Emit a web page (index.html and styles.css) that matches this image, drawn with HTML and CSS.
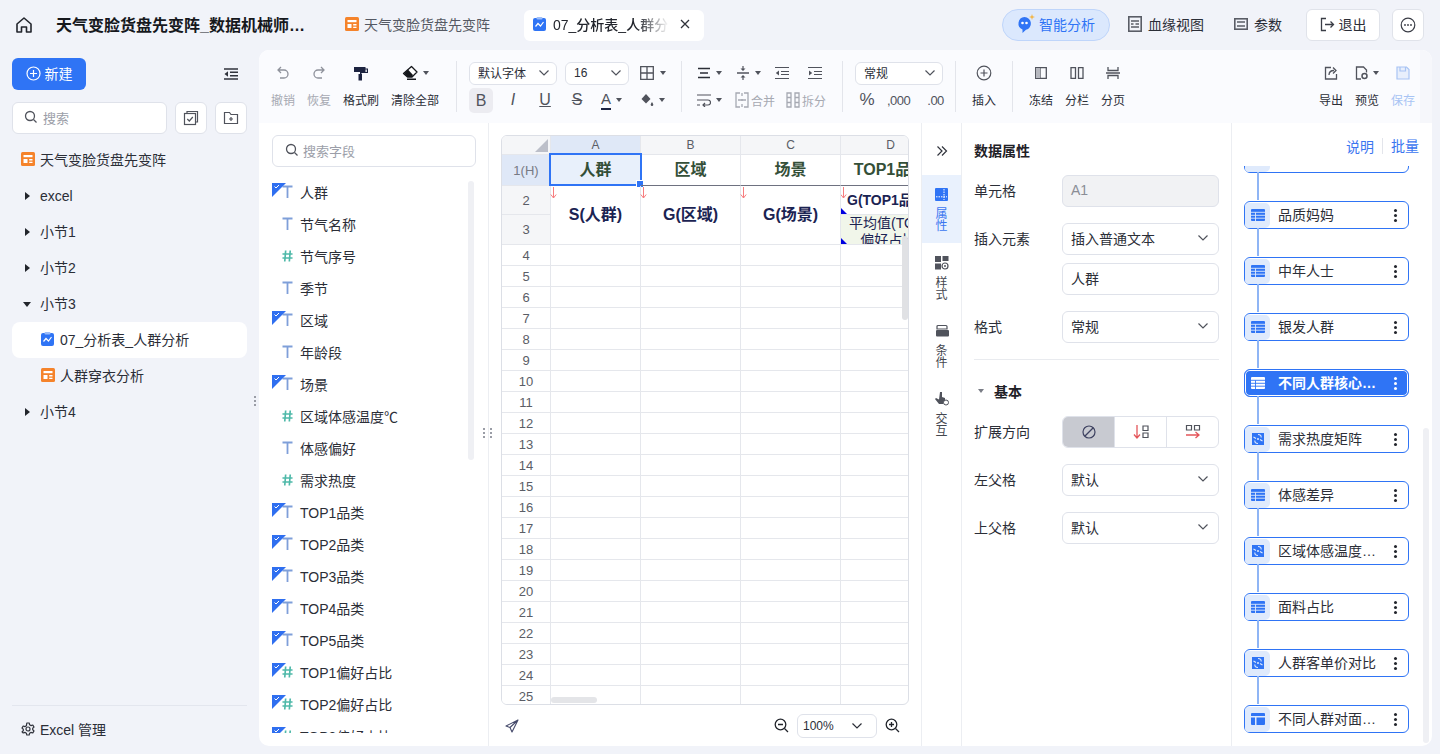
FILE: index.html
```html
<!DOCTYPE html>
<html lang="zh-CN">
<head>
  <meta charset="UTF-8">
  <title>天气变脸货盘先变阵</title>
  <link rel="stylesheet" href="styles.css">
</head>
<body>

<svg class="defs" aria-hidden="true">
  <symbol id="i-board" viewBox="0 0 14 14">
    <rect width="14" height="14" rx="1.5" fill="#f5832b"/>
    <rect x="2.500" y="3" width="9" height="2.200" fill="#fff"/>
    <rect x="2.500" y="7" width="4" height="4" fill="#fff"/>
    <rect x="8.200" y="7" width="3.300" height="1.500" fill="#fff"/>
    <rect x="8.200" y="9.700" width="3.300" height="1.300" fill="#fff"/>
  </symbol>
  <symbol id="i-report" viewBox="0 0 14 14">
    <rect y="1" width="13" height="13" rx="2" fill="#2f74f5"/>
    <rect x="3.500" width="6" height="2.400" rx="1" fill="#9dbdf8"/>
    <path d="M2.500 9.500 5 6.500l2.500 2.500L10.500 5" fill="none" stroke="#fff" stroke-width="1.200"/>
  </symbol>
  <symbol id="i-chev" viewBox="0 0 12 12">
    <path d="M1.500 3.500 6 8l4.500-4.500" fill="none" stroke="currentColor" stroke-width="1.200"/>
  </symbol>
  <symbol id="i-search" viewBox="0 0 14 14">
    <circle cx="6" cy="6" r="4.500" fill="none" stroke="currentColor" stroke-width="1.300"/>
    <path d="m9.500 9.500 3 3" stroke="currentColor" stroke-width="1.300"/>
  </symbol>
  <symbol id="i-t" viewBox="0 0 11 14">
    <path d="M.5 1.500h10M5.500 1.500V13" fill="none" stroke="#7f9fd9" stroke-width="1.800"/>
  </symbol>
  <symbol id="i-hash" viewBox="0 0 12 14">
    <path d="M4 1 3 13M9 1 8 13M.5 4.800h11M.5 9.200h11" fill="none" stroke="#4fb9a9" stroke-width="1.800"/>
  </symbol>
  <symbol id="i-tick" viewBox="0 0 14 14">
    <path d="M0 0h14L0 14z" fill="#2f6ff0"/>
    <path d="m2.500 3.500 1.500 1.500 3-3" fill="none" stroke="#fff" stroke-width="1"/>
  </symbol>
  <symbol id="i-table" viewBox="0 0 14 12">
    <rect width="14" height="12" rx="1" fill="currentColor"/>
    <path d="M0 3.300h14M0 6.300h14M0 9.200h14M4.500 3.300V12" stroke="var(--gap, #dfeafc)" stroke-width=".9"/>
  </symbol>
  <symbol id="i-cols" viewBox="0 0 14 12">
    <path d="M1 0h12a1 1 0 0 1 1 1v2H0V1a1 1 0 0 1 1-1zM0 4.500h4v7.500H1a1 1 0 0 1-1-1zM5.500 4.500H14V11a1 1 0 0 1-1 1H5.500z" fill="currentColor"/>
  </symbol>
  <symbol id="i-pivot" viewBox="0 0 12 12">
    <rect width="12" height="12" fill="#2f74f5"/>
    <path d="M6 1.500c2.500 0 3.500 1.500 3 3M6 10.500c-2.500 0-3.500-1.500-3-3M1.500 4 4 5.500M8 6.500l2.500 1.500" fill="none" stroke="#dfeafc" stroke-width="1.100"/>
    <circle cx="6" cy="6" r="1" fill="#dfeafc"/>
  </symbol>
  <symbol id="i-arrow" viewBox="0 0 7 12">
    <path d="M3.500 0v11M.8 7.500l2.700 3.500 2.700-3.500" fill="none" stroke="#f77e80" stroke-width="1"/>
  </symbol>
  <symbol id="i-lines" viewBox="0 0 14 14">
    <path d="M1 2.500h12M3 7h8M1 11.500h12" fill="none" stroke="currentColor" stroke-width="1.300"/>
  </symbol>
</svg>

<div class="app">
  <header class="topbar">
    <svg class="home" width="18" height="18" viewBox="0 0 18 18"><path d="M2 8 9 2l7 6v8h-4.500v-5h-5v5H2z" fill="none" stroke="#22252c" stroke-width="1.600" stroke-linejoin="round"/></svg>
    <h1 class="doc-title">天气变脸货盘先变阵_数据机械师分析报告</h1>
    <div class="tab"><svg width="14" height="14"><use href="#i-board"/></svg>天气变脸货盘先变阵</div>
    <div class="tab tab-active">
      <svg width="14" height="14"><use href="#i-report"/></svg>
      <span class="tab-name">07_分析表_人群分析表格</span>
      <svg class="tab-close" width="10" height="10" viewBox="0 0 10 10"><path d="m1 1 8 8M9 1 1 9" stroke="#30333a" stroke-width="1.300"/></svg>
    </div>
    <div class="top-actions">
      <button class="ai-btn">
        <svg width="18" height="20" viewBox="0 0 18 20"><path d="M7.500 3a6.500 6.500 0 0 1 1.500 12.800L5.500 19v-3.500A6.500 6.500 0 0 1 7.500 3z" fill="#2f74f5"/><circle cx="5.500" cy="9" r="1.300" fill="#fff"/><circle cx="9.500" cy="9" r="1.300" fill="#fff"/><path d="m15 0 .7 2.300L18 3l-2.300.7L15 6l-.7-2.300L12 3l2.300-.7z" fill="#f4b33c"/></svg>
        智能分析
      </button>
      <div class="top-link lineage">
        <svg width="14" height="16" viewBox="0 0 14 16"><rect x=".8" y=".8" width="12.400" height="14.400" fill="none" stroke="#5a5d66" stroke-width="1.600"/><path d="M3 5h8M3 8h2.500M7.500 8H11M3 11h8" stroke="#5a5d66" stroke-width="1.300"/></svg>
        血缘视图
      </div>
      <div class="top-link params">
        <svg width="14" height="14" viewBox="0 0 14 14"><rect x=".8" y="1.800" width="12.400" height="10.400" fill="none" stroke="#5a5d66" stroke-width="1.600"/><path d="M3 5h8M3 9h8" stroke="#5a5d66" stroke-width="1.300"/></svg>
        参数
      </div>
      <button class="exit-btn">
        <svg width="15" height="15" viewBox="0 0 15 15"><path d="M6 1.500H1.500v12H6M5 7.500h8.500M10.500 4.500l3 3-3 3" fill="none" stroke="#3a3d46" stroke-width="1.300"/></svg>
        退出
      </button>
      <button class="more-btn">
        <svg width="16" height="16" viewBox="0 0 16 16"><circle cx="8" cy="8" r="6.800" fill="none" stroke="#3a3d46" stroke-width="1.200"/><circle cx="5" cy="8" r=".9" fill="#3a3d46"/><circle cx="8" cy="8" r=".9" fill="#3a3d46"/><circle cx="11" cy="8" r=".9" fill="#3a3d46"/></svg>
      </button>
    </div>
  </header>

  <div class="workspace">
    <aside class="sidebar">
      <div class="side-top">
        <button class="new-btn">
          <svg width="15" height="15" viewBox="0 0 15 15"><circle cx="7.500" cy="7.500" r="6.500" fill="none" stroke="#fff" stroke-width="1.200"/><path d="M7.500 4v7M4 7.500h7" stroke="#fff" stroke-width="1.200"/></svg>
          新建
        </button>
        <svg width="14" height="12" viewBox="0 0 14 12"><path d="M0 1h14M6 4.300h8M6 7.700h8M0 11h14" stroke="#30333c" stroke-width="1.400"/><path d="M4 3.300v5.400L.5 6z" fill="#30333c"/></svg>
      </div>
      <div class="side-search">
        <div class="search-box side-box"><svg width="14" height="14"><use href="#i-search"/></svg>搜索</div>
        <button class="icon-btn">
          <svg width="16" height="16" viewBox="0 0 16 16"><path d="M4 3.500V1.500h10.500v10.500H12.500" fill="none" stroke="#50535c" stroke-width="1.200"/><rect x="1.500" y="3.500" width="11" height="11" fill="none" stroke="#50535c" stroke-width="1.200"/><path d="m4.300 9 2 2 3.500-4" fill="none" stroke="#50535c" stroke-width="1.200"/></svg>
        </button>
        <button class="icon-btn">
          <svg width="16" height="16" viewBox="0 0 16 16"><path d="M1.500 2.500h5l1.500 2h6.500v9h-13z" fill="none" stroke="#50535c" stroke-width="1.200"/><path d="M8 7v4M6 9h4" stroke="#50535c" stroke-width="1.200"/></svg>
        </button>
      </div>
      <ul class="side-tree">
        <li class="side-item top-file"><svg width="14" height="14"><use href="#i-board"/></svg>天气变脸货盘先变阵</li>
        <li class="side-item latin"><i class="tri-right"></i>excel</li>
        <li class="side-item"><i class="tri-right"></i>小节1</li>
        <li class="side-item"><i class="tri-right"></i>小节2</li>
        <li class="side-item"><i class="tri-down"></i>小节3</li>
        <li class="side-item child current"><svg width="14" height="14"><use href="#i-report"/></svg>07_分析表_人群分析</li>
        <li class="side-item child"><svg width="14" height="14"><use href="#i-board"/></svg>人群穿衣分析</li>
        <li class="side-item"><i class="tri-right"></i>小节4</li>
      </ul>
      <div class="side-foot">
        <svg width="14" height="14" viewBox="0 0 14 14"><path d="M5.800 1h2.400l.4 1.800 1.500.8 1.700-.6 1.200 2.100-1.300 1.200v1.400l1.300 1.200-1.200 2.100-1.700-.6-1.500.8-.4 1.800H5.800l-.4-1.800-1.500-.8-1.700.6L1 9.900l1.300-1.200V7.300L1 6.100 2.200 4l1.700.6 1.500-.8z" fill="none" stroke="#30333c" stroke-width="1.200" stroke-linejoin="round"/><circle cx="7" cy="7" r="2" fill="none" stroke="#30333c" stroke-width="1.200"/></svg>
        Excel 管理
      </div>
      <i class="grip grip-side"></i>
    </aside>

    <main class="main">
      <div class="toolbar">
        <div class="tgroup g-history">
          <div class="tool off">
            <svg width="16" height="24" viewBox="0 0 16 16"><path d="M6 2 3 5l3 3M3 5h6a4 4 0 0 1 0 8H5" fill="none" stroke="#8f929c" stroke-width="1.300"/></svg>
            <span>撤销</span>
          </div>
          <div class="tool off">
            <svg width="16" height="24" viewBox="0 0 16 16"><path d="m10 2 3 3-3 3M13 5H7a4 4 0 0 0 0 8h4" fill="none" stroke="#8f929c" stroke-width="1.300"/></svg>
            <span>恢复</span>
          </div>
          <div class="tool">
            <svg width="16" height="24" viewBox="0 0 16 16"><path d="M1 2h11.500v1.500H15V8H8.500v1.500H7V7h6.800V4.600h-1.300V7H1z" fill="#1c2340"/><rect x="5.500" y="9" width="3.500" height="6.500" fill="#1c2340"/></svg>
            <span>格式刷</span>
          </div>
          <div class="tool">
            <div class="icon-caret">
              <svg width="16" height="24" viewBox="0 0 16 16"><path d="M9.500 1.500 15 7l-5 5H5.500L1.500 8.500z" fill="#fff" stroke="#15171c" stroke-width="1.300" stroke-linejoin="round"/><path d="M2 8.500 6 4.500l5 5.500-1 2H5.500z" fill="#15171c"/><path d="M5 14.200h9" stroke="#15171c" stroke-width="1.400"/></svg>
              <i class="caret"></i>
            </div>
            <span>清除全部</span>
          </div>
        </div>

        <div class="tgroup g-font">
          <div class="trow">
            <div class="tsel font-sel">默认字体<svg width="12" height="12"><use href="#i-chev"/></svg></div>
            <div class="tsel size-sel">16<svg width="12" height="12"><use href="#i-chev"/></svg></div>
            <div class="icon-caret border-pick">
              <svg width="14" height="14" viewBox="0 0 14 14"><path d="M.7.700h12.600v12.600H.7zM7 .7v12.600M.7 7h12.600" fill="none" stroke="#50535c" stroke-width="1.300"/></svg>
              <i class="caret"></i>
            </div>
          </div>
          <div class="trow">
            <span class="fmt fmt-b">B</span>
            <span class="fmt fmt-i">I</span>
            <span class="fmt fmt-u">U</span>
            <span class="fmt fmt-s">S</span>
            <div class="icon-caret color-pick"><span class="fmt-a">A</span><i class="caret"></i></div>
            <div class="icon-caret">
              <svg width="14" height="14" viewBox="0 0 14 14"><path d="M6 1 1.500 6 6 10.500 10.500 6z" fill="#50535c"/><path d="M12 9c-1 1.500-1.300 2-1.300 2.700a1.300 1.300 0 0 0 2.600 0c0-.7-.3-1.200-1.300-2.700z" fill="#50535c"/></svg>
              <i class="caret"></i>
            </div>
          </div>
        </div>

        <div class="tgroup g-align">
          <div class="trow align-row">
            <div class="icon-caret"><svg width="14" height="14"><use href="#i-lines"/></svg><i class="caret"></i></div>
            <div class="icon-caret">
              <svg width="14" height="16" viewBox="0 0 14 16"><path d="M1 8h12" stroke="#50535c" stroke-width="1.300"/><path d="M7 1v4M7 11v4" stroke="#50535c" stroke-width="1.200"/><path d="M4.500 3.500 7 6l2.500-2.500zM4.500 12.500 7 10l2.500 2.500z" fill="#50535c"/></svg>
              <i class="caret"></i>
            </div>
            <svg class="indent" width="14" height="14" viewBox="0 0 14 14"><path d="M0 1.500h14M6 5.500h8M6 8.500h8M0 12.500h14" stroke="#50535c" stroke-width="1.200"/><path d="M4 4.500v5L.8 7z" fill="#50535c"/></svg>
            <svg class="indent" width="14" height="14" viewBox="0 0 14 14"><path d="M0 1.500h14M6 5.500h8M6 8.500h8M0 12.500h14" stroke="#50535c" stroke-width="1.200"/><path d="M1 4.500v5L4.200 7z" fill="#50535c"/></svg>
          </div>
          <div class="trow align-row">
            <div class="icon-caret">
              <svg width="14" height="14" viewBox="0 0 14 14"><path d="M0 2h14M0 7h11a2.500 2.500 0 0 1 0 5H6M0 12h3M8 10l-2 2 2 2" fill="none" stroke="#50535c" stroke-width="1.200"/></svg>
              <i class="caret"></i>
            </div>
            <div class="merge off">
              <svg width="14" height="16" viewBox="0 0 14 16"><path d="M5 1H1v14h4M9 1h4v14H9M7 1v3M7 7v2M7 12v3M3 8h8" fill="none" stroke="#a6a9b2" stroke-width="1.300"/></svg>
              <span>合并</span>
            </div>
            <div class="merge off">
              <svg width="14" height="16" viewBox="0 0 14 16"><path d="M5 1H1v14h4V1zM9 1h4v14H9zM1 5.500h4M1 10.500h4M9 5.500h4M9 10.500h4" fill="none" stroke="#a6a9b2" stroke-width="1.300"/></svg>
              <span>拆分</span>
            </div>
          </div>
        </div>

        <div class="tgroup g-num">
          <div class="trow"><div class="tsel num-sel">常规<svg width="12" height="12"><use href="#i-chev"/></svg></div></div>
          <div class="trow num-row"><span>%</span><span class="num-small">,000</span><span class="num-small">.00</span></div>
        </div>

        <div class="tgroup g-insert">
          <div class="tool">
            <svg width="16" height="24" viewBox="0 0 16 16"><circle cx="8" cy="8" r="6.800" fill="none" stroke="#50535c" stroke-width="1.200"/><path d="M8 4.500v7M4.500 8h7" stroke="#50535c" stroke-width="1.200"/></svg>
            <span>插入</span>
          </div>
        </div>

        <div class="tgroup g-page">
          <div class="tool">
            <svg width="14" height="24" viewBox="0 0 14 14"><path d="M1.700 1.700h10.600v10.600H1.700zM6 1.700v10.600" fill="none" stroke="#50535c" stroke-width="1.300"/><rect x="2" y="2" width="4" height="10" fill="#b6b8bf"/></svg>
            <span>冻结</span>
          </div>
          <div class="tool">
            <svg width="14" height="24" viewBox="0 0 14 14"><path d="M1 1.700h4.500v10.600H1zM8.500 1.700H13v10.600H8.500z" fill="none" stroke="#50535c" stroke-width="1.300"/></svg>
            <span>分栏</span>
          </div>
          <div class="tool">
            <svg width="14" height="24" viewBox="0 0 14 14"><path d="M2 1v3.500h10V1M2 13V9.500h10V13M0 7h14" fill="none" stroke="#50535c" stroke-width="1.300"/></svg>
            <span>分页</span>
          </div>
        </div>

        <div class="tgroup g-file">
          <div class="tool">
            <svg width="14" height="24" viewBox="0 0 14 14"><path d="M7 1.500H1.500v11.500h11V8" fill="none" stroke="#50535c" stroke-width="1.300"/><path d="M5 9c0-3 2-4.500 5-4.500M9 1.500l3 3-3 3" fill="none" stroke="#50535c" stroke-width="1.300"/></svg>
            <span>导出</span>
          </div>
          <div class="tool">
            <div class="icon-caret">
              <svg width="14" height="24" viewBox="0 0 14 14"><path d="M6 13H1.500V1h7l3 3v2.500" fill="none" stroke="#50535c" stroke-width="1.300"/><circle cx="9.500" cy="10" r="2.500" fill="none" stroke="#50535c" stroke-width="1.500"/></svg>
              <i class="caret caret-small"></i>
            </div>
            <span>预览</span>
          </div>
          <div class="tool save">
            <svg width="14" height="24" viewBox="0 0 14 14"><path d="M1 1h9.500L13 3.500V13H1z" fill="#e8effc" stroke="#a8c4f4" stroke-width="1.200"/><path d="M4 1v4h5.500V1" fill="none" stroke="#a8c4f4" stroke-width="1.200"/></svg>
            <span>保存</span>
          </div>
        </div>
      </div>

      <div class="panels">
        <section class="fields">
          <div class="search-box field-box"><svg width="14" height="14"><use href="#i-search"/></svg>搜索字段</div>
          <ul class="field-list">
            <li class="field on"><svg class="tick" width="14" height="14"><use href="#i-tick"/></svg><svg width="11" height="14"><use href="#i-t"/></svg>人群</li>
            <li class="field"><svg width="11" height="14"><use href="#i-t"/></svg>节气名称</li>
            <li class="field"><svg width="11" height="14"><use href="#i-hash"/></svg>节气序号</li>
            <li class="field"><svg width="11" height="14"><use href="#i-t"/></svg>季节</li>
            <li class="field on"><svg class="tick" width="14" height="14"><use href="#i-tick"/></svg><svg width="11" height="14"><use href="#i-t"/></svg>区域</li>
            <li class="field"><svg width="11" height="14"><use href="#i-t"/></svg>年龄段</li>
            <li class="field on"><svg class="tick" width="14" height="14"><use href="#i-tick"/></svg><svg width="11" height="14"><use href="#i-t"/></svg>场景</li>
            <li class="field"><svg width="11" height="14"><use href="#i-hash"/></svg>区域体感温度℃</li>
            <li class="field"><svg width="11" height="14"><use href="#i-t"/></svg>体感偏好</li>
            <li class="field"><svg width="11" height="14"><use href="#i-hash"/></svg>需求热度</li>
            <li class="field on"><svg class="tick" width="14" height="14"><use href="#i-tick"/></svg><svg width="11" height="14"><use href="#i-t"/></svg>TOP1品类</li>
            <li class="field on"><svg class="tick" width="14" height="14"><use href="#i-tick"/></svg><svg width="11" height="14"><use href="#i-t"/></svg>TOP2品类</li>
            <li class="field on"><svg class="tick" width="14" height="14"><use href="#i-tick"/></svg><svg width="11" height="14"><use href="#i-t"/></svg>TOP3品类</li>
            <li class="field on"><svg class="tick" width="14" height="14"><use href="#i-tick"/></svg><svg width="11" height="14"><use href="#i-t"/></svg>TOP4品类</li>
            <li class="field on"><svg class="tick" width="14" height="14"><use href="#i-tick"/></svg><svg width="11" height="14"><use href="#i-t"/></svg>TOP5品类</li>
            <li class="field on"><svg class="tick" width="14" height="14"><use href="#i-tick"/></svg><svg width="11" height="14"><use href="#i-hash"/></svg>TOP1偏好占比</li>
            <li class="field on"><svg class="tick" width="14" height="14"><use href="#i-tick"/></svg><svg width="11" height="14"><use href="#i-hash"/></svg>TOP2偏好占比</li>
            <li class="field on"><svg class="tick" width="14" height="14"><use href="#i-tick"/></svg><svg width="11" height="14"><use href="#i-hash"/></svg>TOP3偏好占比</li>
          </ul>
          <i class="scroll field-scroll"></i>
          <i class="grip grip-fields"></i>
        </section>

        <section class="sheet-pane">
          <div class="sheet">
            <table class="grid">
              <colgroup><col class="c-head"><col class="c-a"><col class="c-std"><col class="c-std"><col class="c-std"></colgroup>
              <tr class="r-cols"><th class="corner"><i></i></th><th class="col-sel">A</th><th>B</th><th>C</th><th>D</th></tr>
              <tr class="r-head">
                <th class="row-sel">1(H)</th>
                <td class="title-cell a1">人群<div class="a1-box"></div></td>
                <td class="title-cell">区域</td>
                <td class="title-cell">场景</td>
                <td class="title-cell">TOP1品类</td>
              </tr>
              <tr class="r-2">
                <th class="row-grey">2</th>
                <td class="data-cell" rowspan="2"><svg class="mark" width="7" height="12"><use href="#i-arrow"/></svg>S(人群)</td>
                <td class="data-cell" rowspan="2"><svg class="mark" width="7" height="12"><use href="#i-arrow"/></svg>G(区域)</td>
                <td class="data-cell" rowspan="2"><svg class="mark" width="7" height="12"><use href="#i-arrow"/></svg>G(场景)</td>
                <td class="top-cell"><svg class="mark" width="7" height="12"><use href="#i-arrow"/></svg>G(TOP1品类)<i class="blue-tri"></i></td>
              </tr>
              <tr class="r-3">
                <th class="row-grey">3</th>
                <td class="avg-cell"><div class="avg-text">平均值(TOP1偏好占比)</div><i class="blue-tri"></i></td>
              </tr>
              <tr><th>4</th><td></td><td></td><td></td><td></td></tr>
              <tr><th>5</th><td></td><td></td><td></td><td></td></tr>
              <tr><th>6</th><td></td><td></td><td></td><td></td></tr>
              <tr><th>7</th><td></td><td></td><td></td><td></td></tr>
              <tr><th>8</th><td></td><td></td><td></td><td></td></tr>
              <tr><th>9</th><td></td><td></td><td></td><td></td></tr>
              <tr><th>10</th><td></td><td></td><td></td><td></td></tr>
              <tr><th>11</th><td></td><td></td><td></td><td></td></tr>
              <tr><th>12</th><td></td><td></td><td></td><td></td></tr>
              <tr><th>13</th><td></td><td></td><td></td><td></td></tr>
              <tr><th>14</th><td></td><td></td><td></td><td></td></tr>
              <tr><th>15</th><td></td><td></td><td></td><td></td></tr>
              <tr><th>16</th><td></td><td></td><td></td><td></td></tr>
              <tr><th>17</th><td></td><td></td><td></td><td></td></tr>
              <tr><th>18</th><td></td><td></td><td></td><td></td></tr>
              <tr><th>19</th><td></td><td></td><td></td><td></td></tr>
              <tr><th>20</th><td></td><td></td><td></td><td></td></tr>
              <tr><th>21</th><td></td><td></td><td></td><td></td></tr>
              <tr><th>22</th><td></td><td></td><td></td><td></td></tr>
              <tr><th>23</th><td></td><td></td><td></td><td></td></tr>
              <tr><th>24</th><td></td><td></td><td></td><td></td></tr>
              <tr><th>25</th><td></td><td></td><td></td><td></td></tr>
            </table>
            <i class="sheet-vbar"></i>
            <i class="sheet-hbar"></i>
          </div>
          <div class="sheet-foot">
            <svg width="14" height="14" viewBox="0 0 14 14"><path d="M13 1 1 7l4 1.500L7 13zM13 1 5 8.500" fill="none" stroke="#454a6b" stroke-width="1.100" stroke-linejoin="round"/></svg>
            <div class="zoom-tools">
              <svg width="15" height="15" viewBox="0 0 15 15"><circle cx="6.500" cy="6.500" r="5.300" fill="none" stroke="#22252c" stroke-width="1.300"/><path d="m10.500 10.500 3.500 3.500M4 6.500h5" stroke="#22252c" stroke-width="1.300"/></svg>
              <div class="zoom-sel">100%<svg width="12" height="12"><use href="#i-chev"/></svg></div>
              <svg width="15" height="15" viewBox="0 0 15 15"><circle cx="6.500" cy="6.500" r="5.300" fill="none" stroke="#22252c" stroke-width="1.300"/><path d="m10.500 10.500 3.500 3.500M4 6.500h5M6.500 4v5" stroke="#22252c" stroke-width="1.300"/></svg>
            </div>
          </div>
        </section>

        <nav class="side-tabs">
          <div class="fold"><svg width="12" height="12" viewBox="0 0 12 12"><path d="m1.500 1.500 4.500 4.500-4.500 4.500M6 1.500l4.500 4.500L6 10.500" fill="none" stroke="#30333c" stroke-width="1.200"/></svg></div>
          <div class="stab active">
            <svg width="13" height="13" viewBox="0 0 13 13"><rect width="13" height="13" rx="1" fill="#2f74f5"/><path d="M9 1v11M1 8.800h11" stroke="#fff" stroke-width="1" stroke-dasharray="1.500 1"/></svg>
            <span>属性</span>
          </div>
          <div class="stab">
            <svg width="14" height="14" viewBox="0 0 14 14"><path d="M0 0h6v6H0zM7.500 0h6v5h-6zM0 7.500h6v6H0z" fill="#50535c"/><circle cx="10" cy="10" r="3" fill="none" stroke="#50535c" stroke-width="1.200"/><circle cx="10" cy="10" r="1" fill="#50535c"/></svg>
            <span>样式</span>
          </div>
          <div class="stab">
            <svg width="14" height="14" viewBox="0 0 14 14"><path d="M3 1.500h8a1 1 0 0 1 1 1V5H2V2.500a1 1 0 0 1 1-1z" fill="none" stroke="#50535c" stroke-width="1.200"/><rect x="1" y="6" width="13" height="6.500" rx="1" fill="#50535c"/></svg>
            <span>条件</span>
          </div>
          <div class="stab">
            <svg width="14" height="14" viewBox="0 0 14 14"><path d="M5 0h2v5l3 1v3l-2 3H4L0 7l1-1 3 1.500z" fill="#50535c"/><circle cx="11" cy="10.500" r="2.500" fill="#fff" stroke="#50535c" stroke-width="1"/></svg>
            <span>交互</span>
          </div>
        </nav>

        <section class="props">
          <h3 class="props-title">数据属性</h3>
          <div class="prow">
            <label>单元格</label>
            <div class="ctl ctl-off">A1</div>
          </div>
          <div class="prow">
            <label>插入元素</label>
            <div class="ctl">插入普通文本<svg width="12" height="12"><use href="#i-chev"/></svg></div>
          </div>
          <div class="prow prow-tight">
            <label></label>
            <div class="ctl">人群</div>
          </div>
          <div class="prow">
            <label>格式</label>
            <div class="ctl">常规<svg width="12" height="12"><use href="#i-chev"/></svg></div>
          </div>
          <hr class="props-line">
          <div class="basic"><i class="tri-small"></i>基本</div>
          <div class="prow prow-tight">
            <label>扩展方向</label>
            <div class="segment">
              <span class="seg seg-on"><svg width="14" height="14" viewBox="0 0 14 14"><circle cx="7" cy="7" r="6" fill="none" stroke="#3d4160" stroke-width="1.200"/><path d="m3 11 8-8" stroke="#3d4160" stroke-width="1.200"/></svg></span>
              <span class="seg"><svg width="16" height="16" viewBox="0 0 16 16"><path d="M4 1v13M1 10.500 4 14l3-3.500" fill="none" stroke="#e4555a" stroke-width="1.300"/><path d="M10 2h5v4.500h-5zM10 9h5v4.500h-5z" fill="none" stroke="#50535c" stroke-width="1.200"/></svg></span>
              <span class="seg"><svg width="16" height="16" viewBox="0 0 16 16"><path d="M1.500 1.500h5v4.500h-5zM9.500 1.500h5v4.500h-5z" fill="none" stroke="#50535c" stroke-width="1.200"/><path d="M1 11h13M10.500 8l3.500 3-3.500 3" fill="none" stroke="#e4555a" stroke-width="1.300"/></svg></span>
            </div>
          </div>
          <div class="prow">
            <label>左父格</label>
            <div class="ctl">默认<svg width="12" height="12"><use href="#i-chev"/></svg></div>
          </div>
          <div class="prow">
            <label>上父格</label>
            <div class="ctl">默认<svg width="12" height="12"><use href="#i-chev"/></svg></div>
          </div>
        </section>

        <section class="blocks">
          <div class="blocks-head"><a>说明</a><a>批量</a></div>
          <div class="block-list">
            <div class="block"><span class="block-icon"><svg width="14" height="12"><use href="#i-table"/></svg></span><span class="block-name">女性人群</span><i class="kebab"></i></div>
            <div class="block"><span class="block-icon"><svg width="14" height="12"><use href="#i-table"/></svg></span><span class="block-name">品质妈妈</span><i class="kebab"></i></div>
            <div class="block"><span class="block-icon"><svg width="14" height="12"><use href="#i-table"/></svg></span><span class="block-name">中年人士</span><i class="kebab"></i></div>
            <div class="block"><span class="block-icon"><svg width="14" height="12"><use href="#i-table"/></svg></span><span class="block-name">银发人群</span><i class="kebab"></i></div>
            <div class="block selected"><span class="block-icon"><svg width="14" height="12"><use href="#i-table"/></svg></span><span class="block-name">不同人群核心需求分析</span><i class="kebab"></i></div>
            <div class="block"><span class="block-icon"><svg width="12" height="12"><use href="#i-pivot"/></svg></span><span class="block-name">需求热度矩阵</span><i class="kebab"></i></div>
            <div class="block"><span class="block-icon"><svg width="14" height="12"><use href="#i-table"/></svg></span><span class="block-name">体感差异</span><i class="kebab"></i></div>
            <div class="block"><span class="block-icon"><svg width="12" height="12"><use href="#i-pivot"/></svg></span><span class="block-name">区域体感温度偏好分析</span><i class="kebab"></i></div>
            <div class="block"><span class="block-icon"><svg width="14" height="12"><use href="#i-table"/></svg></span><span class="block-name">面料占比</span><i class="kebab"></i></div>
            <div class="block"><span class="block-icon"><svg width="12" height="12"><use href="#i-pivot"/></svg></span><span class="block-name">人群客单价对比</span><i class="kebab"></i></div>
            <div class="block"><span class="block-icon"><svg width="14" height="12"><use href="#i-cols"/></svg></span><span class="block-name">不同人群对面料偏好分析</span><i class="kebab"></i></div>
          </div>
          <i class="scroll block-scroll"></i>
        </section>
      </div>
    </main>
  </div>
</div>

</body>
</html>
```

FILE: styles.css
```css
* {
  box-sizing: border-box;
}
html, body {
  margin: 0;
  height: 100%;
  overflow: hidden;
}
body {
  background: #f1f3f9;
  color: #2b2e37;
  font-family: "Liberation Sans", "Noto Sans CJK SC", sans-serif;
  font-size: 14px;
}
ul {
  list-style: none;
  margin: 0;
  padding: 0;
}
button {
  font: inherit;
  color: inherit;
  cursor: pointer;
}
svg {
  flex: none;
  display: block;
}
.defs {
  position: absolute;
  width: 0;
  height: 0;
}
.app {
  display: flex;
  flex-direction: column;
  height: 100%;
}

/* top bar */
.topbar {
  height: 50px;
  flex: none;
  display: flex;
  align-items: center;
  padding: 0 16px 0 15px;
}
.doc-title {
  width: 250px;
  margin: 0 0 0 23px;
  padding-bottom: 2px;
  font-size: 16px;
  font-weight: 700;
  color: #16181d;
  white-space: nowrap;
  overflow: hidden;
  text-overflow: ellipsis;
}
.tab {
  display: flex;
  align-items: center;
  gap: 5px;
  margin-left: 39px;
  padding-bottom: 2px;
  color: #555963;
}
.tab-active {
  width: 180px;
  height: 31px;
  margin-left: 34px;
  padding: 0 14px 2px 9px;
  gap: 6px;
  background: #fff;
  border-radius: 6px;
  color: #22252c;
  font-weight: 500;
}
.tab-name {
  width: 116px;
  white-space: nowrap;
  overflow: hidden;
  -webkit-mask-image: linear-gradient(to right, #000 72%, transparent);
  mask-image: linear-gradient(to right, #000 72%, transparent);
}
.tab-close {
  margin-left: auto;
}
.top-actions {
  margin-left: auto;
  display: flex;
  align-items: center;
}
.ai-btn {
  width: 108px;
  height: 32px;
  display: flex;
  align-items: center;
  justify-content: center;
  gap: 4px;
  padding: 0 0 2px;
  background: #dbe8fd;
  border: 1px solid #bfd5fa;
  border-radius: 16px;
  color: #2f74f5;
}
.top-link {
  display: flex;
  align-items: center;
  gap: 6px;
  padding-bottom: 2px;
  color: #2b2e37;
}
.lineage {
  margin-left: 18px;
}
.params {
  margin-left: 30px;
}
.exit-btn {
  width: 74px;
  height: 32px;
  margin-left: 24px;
  display: flex;
  align-items: center;
  justify-content: center;
  gap: 4px;
  padding: 0 0 2px;
  background: #fff;
  border: 1px solid #e0e3ea;
  border-radius: 6px;
}
.more-btn {
  width: 32px;
  height: 32px;
  margin-left: 12px;
  display: flex;
  align-items: center;
  justify-content: center;
  padding: 0;
  background: #fff;
  border: 1px solid #e0e3ea;
  border-radius: 6px;
}

/* left tree */
.workspace {
  flex: 1;
  min-height: 0;
  display: flex;
}
.sidebar {
  width: 259px;
  flex: none;
  position: relative;
  display: flex;
  flex-direction: column;
  padding: 8px 12px 0;
}
.side-top {
  display: flex;
  align-items: center;
  justify-content: space-between;
  padding-right: 9px;
}
.new-btn {
  width: 74px;
  height: 32px;
  display: flex;
  align-items: center;
  justify-content: center;
  gap: 4px;
  padding: 0 0 2px;
  background: #2f74f5;
  border: 0;
  border-radius: 6px;
  color: #fff;
}
.side-search {
  display: flex;
  gap: 8px;
  margin-top: 12px;
}
.search-box {
  display: flex;
  align-items: center;
  gap: 5px;
  height: 32px;
  padding: 0 0 2px 11px;
  background: #fff;
  border: 1px solid #dfe2ea;
  border-radius: 6px;
  font-size: 13px;
  color: #9b9ea8;
}
.search-box svg {
  color: #50535c;
}
.side-box {
  width: 155px;
}
.icon-btn {
  width: 32px;
  height: 32px;
  display: flex;
  align-items: center;
  justify-content: center;
  background: #fff;
  border: 1px solid #dfe2ea;
  border-radius: 6px;
  padding: 0;
}
.side-tree {
  margin-top: 8px;
}
.side-item {
  height: 36px;
  display: flex;
  align-items: center;
  padding: 0 0 2px 28px;
  position: relative;
}
.side-item.latin {
  padding-bottom: 0;
}
.side-item.top-file {
  padding-left: 9px;
  gap: 5px;
}
.side-item.child {
  padding-left: 29px;
  gap: 5px;
  border-radius: 8px;
}
.side-item.current {
  background: #fff;
}
.tri-right, .tri-down {
  position: absolute;
  width: 0;
  height: 0;
}
.tri-right {
  left: 13px;
  top: 14px;
  border-left: 5px solid #22252c;
  border-top: 4px solid transparent;
  border-bottom: 4px solid transparent;
}
.tri-down {
  left: 11px;
  top: 16px;
  border-top: 5px solid #22252c;
  border-left: 4px solid transparent;
  border-right: 4px solid transparent;
}
.side-foot {
  margin-top: auto;
  height: 49px;
  display: flex;
  align-items: center;
  gap: 5px;
  padding: 0 0 2px 9px;
  border-top: 1px solid #e3e6ee;
}
.grip {
  position: absolute;
  width: 2px;
  height: 12px;
  background: radial-gradient(circle, #9a9da6 0.8px, transparent 1px) 0 0 / 2px 4px;
}
.grip-side {
  right: 3px;
  top: 345px;
}

/* main panel */
.main {
  flex: 1;
  min-width: 0;
  margin: 0 8px 8px 0;
  display: flex;
  flex-direction: column;
  background: #fff;
  border-radius: 10px;
  overflow: hidden;
}
.toolbar {
  height: 73px;
  flex: none;
  display: flex;
  align-items: flex-start;
  padding-top: 11px;
  background: linear-gradient(to right, #fafbfe 1161px, #f6f7fb 1161px);
  font-size: 12px;
}
.tgroup {
  height: 51px;
  display: flex;
  border-right: 1px solid #e3e5eb;
}
.g-history {
  gap: 12px;
  padding: 0 17px 0 12px;
}
.g-font, .g-align, .g-num {
  flex-direction: column;
  gap: 3px;
}
.g-font {
  width: 225px;
  padding-left: 12px;
}
.g-align {
  width: 161px;
  padding-left: 15px;
}
.g-num {
  width: 113px;
  padding-left: 12px;
}
.g-insert {
  padding: 0 16px;
}
.g-page {
  gap: 12px;
  padding: 0 16px;
  border-right: 0;
}
.g-file {
  margin-left: auto;
  gap: 12px;
  padding-right: 17px;
  border-right: 0;
}
.tool {
  display: flex;
  flex-direction: column;
  align-items: center;
  gap: 4px;
  color: #2b2e37;
}
.tool > span {
  line-height: 24px;
  white-space: nowrap;
}
.off {
  color: #a6a9b2;
}
.tool.off {
  color: #a6a9b2;
}
.tool.save {
  color: #a8c4f4;
}
.trow {
  height: 24px;
  display: flex;
  align-items: center;
}
.icon-caret {
  display: flex;
  align-items: center;
  gap: 5px;
}
.caret {
  width: 0;
  height: 0;
  border-top: 4px solid #50535c;
  border-left: 3.500px solid transparent;
  border-right: 3.500px solid transparent;
}
.caret-small {
  margin-left: -1px;
}
.tsel {
  height: 23px;
  display: flex;
  align-items: center;
  justify-content: space-between;
  padding: 0 6px 1px 8px;
  background: #fff;
  border: 1px solid #dfe2ea;
  border-radius: 6px;
  color: #2b2e37;
}
.tsel svg {
  color: #50535c;
}
.font-sel, .num-sel {
  width: 88px;
}
.size-sel {
  width: 64px;
  margin-left: 8px;
}
.border-pick {
  margin-left: 11px;
  gap: 6px;
}
.fmt {
  width: 32px;
  text-align: center;
  font-size: 16px;
  color: #50535c;
}
.fmt-b {
  width: 24px;
  height: 25px;
  line-height: 25px;
  margin-right: 4px;
  background: #ececf1;
  border-radius: 5px;
}
.fmt-i {
  font-style: italic;
}
.fmt-u {
  text-decoration: underline;
}
.fmt-s {
  text-decoration: line-through;
}
.color-pick {
  width: 47px;
  padding-left: 8px;
}
.fmt-a {
  font-size: 15px;
  line-height: 18px;
  color: #50535c;
  border-bottom: 2px solid #1c2340;
}
.align-row {
  justify-content: flex-start;
}
.align-row > .icon-caret:nth-child(2) {
  margin-left: 14px;
}
.align-row > .indent:nth-child(3) {
  margin-left: 14px;
}
.align-row > .indent:nth-child(4) {
  margin-left: 19px;
}
.merge {
  display: flex;
  align-items: center;
  gap: 2px;
  margin-left: 13px;
}
.merge + .merge {
  margin-left: 11px;
}
.num-row {
  color: #50535c;
}
.num-row span {
  font-weight: 500;
  text-align: center;
}
.num-row span:first-child {
  width: 24px;
  font-size: 17px;
}
.num-small {
  width: 35px;
  margin-left: 2px;
  font-size: 13px;
  letter-spacing: -0.5px;
}

/* panels row */
.panels {
  flex: 1;
  min-height: 0;
  display: flex;
}
.fields {
  width: 230px;
  flex: none;
  position: relative;
  padding: 12px 13px 0;
  border-right: 1px solid #eceef2;
}
.field-box {
  width: 204px;
  gap: 4px;
  padding-left: 12px;
}
.field-list {
  margin-top: 9px;
  height: 557px;
  overflow: hidden;
}
.field {
  position: relative;
  height: 32px;
  display: flex;
  align-items: center;
  gap: 7px;
  padding-left: 10px;
  color: #2b2e37;
}
.tick {
  position: absolute;
  left: 0;
  top: 7px;
}
.scroll {
  position: absolute;
  background: #eff0f4;
  border-radius: 3px;
}
.field-scroll {
  left: 209px;
  top: 58px;
  width: 6px;
  height: 279px;
}
.grip-fields {
  left: 224px;
  top: 304px;
}
.grip-fields::after {
  content: "";
  position: absolute;
  left: 7px;
  top: 0;
  width: 2px;
  height: 12px;
  background: inherit;
}
.sheet-pane {
  width: 433px;
  flex: none;
  display: flex;
  flex-direction: column;
  padding: 12px 12px 0;
  border-right: 1px solid #eceef2;
}
.sheet {
  position: relative;
  height: 570px;
  flex: none;
  border: 1px solid #dcdfe6;
  border-radius: 6px;
  overflow: hidden;
}
.grid {
  width: 439px;
  table-layout: fixed;
  border-collapse: separate;
  border-spacing: 0;
}
.c-head {
  width: 49px;
}
.c-a {
  width: 90px;
}
.c-std {
  width: 100px;
}
.grid th, .grid td {
  position: relative;
  height: 21px;
  padding: 0;
  border-right: 1px solid #e5e7ec;
  border-bottom: 1px solid #e5e7ec;
}
.grid th {
  font-weight: 400;
  font-size: 13px;
  color: #5a5d66;
  background: #fff;
}
.r-cols th {
  height: 19px;
  font-size: 12px;
  line-height: 17px;
  background: #f5f6f8;
}
.r-cols .col-sel {
  background: #dfe8f7;
}
.corner i {
  position: absolute;
  right: 2px;
  bottom: 2px;
  border-right: 13px solid #bcbfc9;
  border-top: 13px solid transparent;
}
.r-head th, .r-head td {
  height: 31px;
}
.r-head td {
  border-bottom-color: #6e7180;
}
.grid .row-sel {
  background: #dfe8f7;
  color: #777a84;
}
.r-2 th, .r-2 .top-cell {
  height: 29px;
}
.r-3 th, .r-3 td {
  height: 30px;
}
.grid .row-grey {
  background: #f5f6f8;
}
.grid .title-cell {
  padding-bottom: 5px;
  text-align: center;
  font-size: 16px;
  font-weight: 700;
  color: #344f38;
  white-space: nowrap;
}
.grid .a1 {
  background: #e8f0fb;
}
.a1-box {
  position: absolute;
  left: -2px;
  top: -2px;
  width: 93px;
  height: 33px;
  border: 2px solid #2f74f5;
}
.a1-box::after {
  content: "";
  position: absolute;
  right: -4px;
  bottom: -4px;
  width: 6px;
  height: 6px;
  background: #2f74f5;
  border: 1px solid #fff;
}
.grid .data-cell {
  padding-bottom: 4px;
  text-align: center;
  font-size: 16px;
  font-weight: 700;
  color: #1b2352;
}
.mark {
  position: absolute;
  left: -1px;
  top: 1px;
}
.grid .top-cell {
  padding: 0 0 2px 6px;
  font-size: 14px;
  font-weight: 700;
  color: #1b2352;
  white-space: nowrap;
  overflow: hidden;
}
.avg-cell {
  background: #f1f6ea;
  color: #1b2352;
}
.avg-text {
  height: 29px;
  padding: 0 8px;
  overflow: hidden;
  text-align: center;
  line-height: 17px;
}
.blue-tri {
  position: absolute;
  left: 0;
  bottom: 0;
  border-left: 6px solid #0000e0;
  border-top: 6px solid transparent;
}
.sheet-vbar {
  position: absolute;
  left: 400px;
  top: 100px;
  width: 6px;
  height: 84px;
  background: #e0e1e4;
  border-radius: 3px;
}
.sheet-hbar {
  position: absolute;
  left: 49px;
  bottom: 1px;
  width: 46px;
  height: 6px;
  background: #e4e5e8;
  border-radius: 3px;
}
.sheet-foot {
  flex: 1;
  display: flex;
  align-items: center;
  justify-content: space-between;
  padding: 0 9px 0 4px;
}
.zoom-tools {
  display: flex;
  align-items: center;
  gap: 8px;
}
.zoom-sel {
  width: 80px;
  height: 24px;
  display: flex;
  align-items: center;
  justify-content: space-between;
  padding: 0 13px 0 5px;
  border: 1px solid #dfe2ea;
  border-radius: 6px;
  font-size: 12px;
}

/* property tabs */
.side-tabs {
  width: 40px;
  flex: none;
  border-right: 1px solid #eceef2;
}
.fold {
  height: 52px;
  display: flex;
  align-items: center;
  justify-content: center;
  padding-top: 4px;
}
.stab {
  height: 68px;
  display: flex;
  flex-direction: column;
  align-items: center;
  padding-top: 13px;
  color: #44474f;
  font-size: 12px;
  line-height: 12px;
}
.stab span {
  width: 12px;
  margin-top: 7px;
}
.stab.active {
  background: #e9f1fd;
  color: #3b76f0;
}
.props {
  width: 270px;
  flex: none;
  padding: 18px 12px 0;
  border-right: 1px solid #eceef2;
}
.props-title {
  margin: 0 0 14px;
  font-size: 14px;
  font-weight: 700;
  line-height: 20px;
  color: #1f2127;
}
.prow {
  display: flex;
  align-items: center;
  margin-top: 16px;
}
.props-title + .prow {
  margin-top: 0;
}
.prow-tight {
  margin-top: 8px;
}
.prow label {
  width: 88px;
  flex: none;
  padding-bottom: 2px;
}
.ctl {
  width: 157px;
  height: 32px;
  display: flex;
  align-items: center;
  justify-content: space-between;
  padding: 0 9px 2px 8px;
  border: 1px solid #dfe2ea;
  border-radius: 6px;
  color: #2b2e37;
}
.ctl svg {
  color: #50535c;
}
.ctl-off {
  background: #f1f2f4;
  color: #8a8d96;
}
.props-line {
  margin: 16px 0 0;
  border: 0;
  border-top: 1px solid #e9ebef;
}
.basic {
  display: flex;
  align-items: center;
  gap: 10px;
  height: 20px;
  margin: 22px 0 14px;
  padding: 0 0 2px 4px;
  font-weight: 700;
  color: #1f2127;
}
.prow-tight:has(.segment) {
  margin-top: 0;
}
.tri-small {
  width: 0;
  height: 0;
  border-top: 4px solid #7a7d86;
  border-left: 3.500px solid transparent;
  border-right: 3.500px solid transparent;
}
.segment {
  width: 157px;
  height: 32px;
  display: flex;
  border: 1px solid #dfe2ea;
  border-radius: 6px;
  overflow: hidden;
}
.seg {
  flex: 1;
  display: flex;
  align-items: center;
  justify-content: center;
  border-left: 1px solid #dfe2ea;
}
.seg-on {
  background: #c8cad1;
  border-left: 0;
}

/* block tree */
.blocks {
  flex: 1;
  min-width: 0;
  position: relative;
  padding-left: 12px;
}
.blocks-head {
  height: 43px;
  display: flex;
  align-items: center;
  justify-content: flex-end;
  padding: 3px 13px 0 0;
  color: #3b76f0;
}
.blocks-head a + a {
  margin-left: 8px;
  padding-left: 8px;
  border-left: 1px solid #e3e5eb;
  line-height: 16px;
}
.block-list {
  height: 580px;
  overflow: hidden;
}
.block {
  position: relative;
  width: 165px;
  height: 28px;
  margin-top: 28px;
  display: flex;
  align-items: center;
  border: 1.500px solid #2f74f5;
  border-radius: 6px;
  background: #fff;
}
.block:first-child {
  margin-top: -21px;
}
.block + .block::before {
  content: "";
  position: absolute;
  left: 12px;
  top: -30px;
  width: 2px;
  height: 28px;
  background: #8fb5f5;
}
.block-icon {
  width: 25px;
  height: 25px;
  flex: none;
  display: flex;
  align-items: center;
  justify-content: center;
  background: #dfeafc;
  border-radius: 4px 5px 5px 4px;
  color: #2f74f5;
}
.block-name {
  width: 100px;
  margin-left: 8px;
  padding-bottom: 2px;
  white-space: nowrap;
  overflow: hidden;
  text-overflow: ellipsis;
  color: #2b2e37;
}
.kebab {
  width: 3px;
  height: 3px;
  margin-left: auto;
  margin-right: 11px;
  background: #22252c;
  border-radius: 50%;
  box-shadow: 0 -5px 0 #22252c, 0 5px 0 #22252c;
}
.block.selected {
  background: #2f74f5;
  box-shadow: inset 0 0 0 1px #fff;
}
.selected .block-icon {
  background: transparent;
  color: #fff;
  --gap: #2f74f5;
}
.selected .block-name {
  color: #fff;
  font-weight: 700;
}
.selected .kebab {
  background: #fff;
  box-shadow: 0 -5px 0 #fff, 0 5px 0 #fff;
}
.block-scroll {
  left: 191px;
  top: 305px;
  width: 6px;
  height: 315px;
}
```
